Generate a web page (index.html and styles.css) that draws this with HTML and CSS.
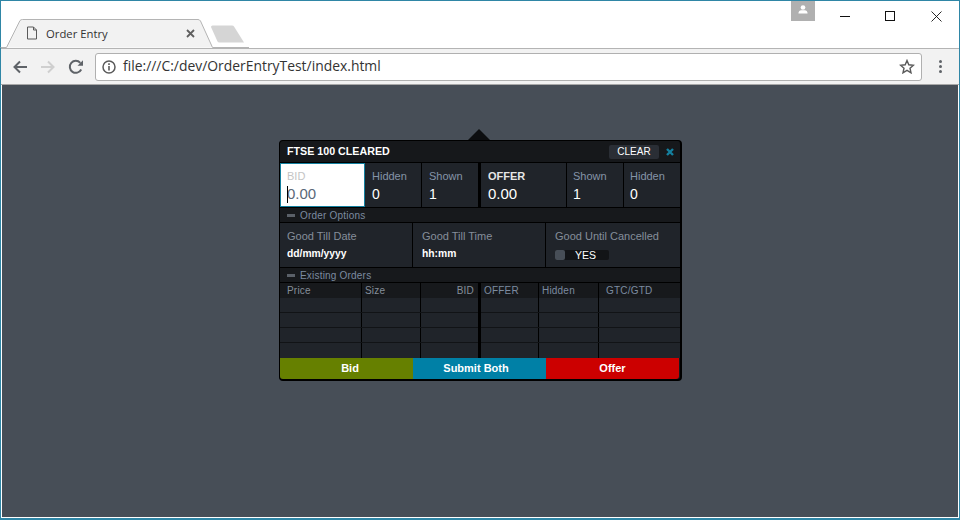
FILE: index.html
```html
<!DOCTYPE html>
<html lang="en">
<head>
  <meta charset="UTF-8" />
  <title>Order Entry</title>
  <link rel="stylesheet" href="styles.css">
</head>
<body>
  <div class="window">

    <!-- tab strip -->
    <div class="tabstrip">
      <svg class="tab-shape" width="250" height="48" viewBox="0 0 250 48">
        <path d="M0.500 47.500H6.500L20 20.500Q21 19.500 22.500 19.500H198Q199.500 19.500 200.500 21L212.500 47.500H249" fill="#f2f2f2" stroke="#b4b4b4"/>
        <path d="M211 27Q211 25.500 212.500 25.500H232Q233.500 25.500 234 26.500L244 42.500H219.500Q218 42.500 217.500 41.500Z" fill="#d5d5d5"/>
      </svg>
      <div class="tab">
        <svg class="tab-icon" width="12" height="14" viewBox="0 0 12 14">
          <path d="M1.500 1H7.500L10.500 4V13H1.500ZM7.500 1V4H10.500" fill="none" stroke="#5a5a5a"/>
        </svg>
        <span class="tab-title">Order Entry</span>
        <svg class="tab-close" width="9" height="9" viewBox="0 0 9 9">
          <path d="M1 1L8 8M8 1L1 8" stroke="#5f5f5f" stroke-width="1.800"/>
        </svg>
      </div>
      <div class="win-controls">
        <div class="profile">
          <svg width="10" height="9" viewBox="0 0 12 10.500">
            <circle cx="6" cy="2.800" r="2.800" fill="#fff"/>
            <path d="M0.500 10Q0.500 6.500 4 6H8Q11.500 6.500 11.500 10Z" fill="#fff"/>
          </svg>
        </div>
        <div class="win-btn">
          <svg width="11" height="11" viewBox="0 0 11 11"><path d="M0 5.500H10" stroke="#111"/></svg>
        </div>
        <div class="win-btn">
          <svg width="11" height="11" viewBox="0 0 11 11"><rect x="0.500" y="0.500" width="9" height="9" fill="none" stroke="#111"/></svg>
        </div>
        <div class="win-btn win-close">
          <svg width="11" height="11" viewBox="0 0 11 11"><path d="M0.500 0.500L10.500 10.500M10.500 0.500L0.500 10.500" stroke="#111" stroke-width="0.900"/></svg>
        </div>
      </div>
    </div>

    <!-- toolbar -->
    <div class="toolbar">
      <svg class="nav-icon" width="16" height="16" viewBox="0 0 16 16">
        <path d="M15 8H3M8 2.500L2.500 8L8 13.500" fill="none" stroke="#5f6368" stroke-width="2"/>
      </svg>
      <svg class="nav-icon" width="16" height="16" viewBox="0 0 16 16">
        <path d="M1 8H13M8 2.500L13.500 8L8 13.500" fill="none" stroke="#cfcfcf" stroke-width="2"/>
      </svg>
      <svg class="nav-icon nav-reload" width="16" height="16" viewBox="0 0 16 16">
        <path d="M13.200 10.500A6 6 0 1 1 12.300 3.800" fill="none" stroke="#5f6368" stroke-width="2"/>
        <path d="M9.500 6.800H15V1.300Z" fill="#5f6368"/>
      </svg>
      <div class="omnibox">
        <svg class="info-icon" width="14" height="14" viewBox="0 0 14 14">
          <circle cx="7" cy="7" r="6" fill="none" stroke="#5a5a5a" stroke-width="1.500"/>
          <path d="M7 6V10.500M7 3.300V5" stroke="#5a5a5a" stroke-width="1.600"/>
        </svg>
        <span class="url">file:///C:/dev/OrderEntryTest/index.html</span>
        <svg class="star" width="16" height="15" viewBox="0 0 16 15">
          <path d="M8 1.500L9.800 5.800L14.500 6.200L11 9.200L12 13.800L8 11.400L4 13.800L5 9.200L1.500 6.200L6.200 5.800Z" fill="none" stroke="#5a5a5a" stroke-width="1.400"/>
        </svg>
      </div>
      <div class="menu-dots"><i></i><i></i><i></i></div>
    </div>

    <div class="content">
      <div class="ticket">
        <div class="ticket-head">
          <span class="ticket-title">FTSE 100 CLEARED</span>
          <span class="clear-btn">CLEAR</span>
          <svg class="close-x" width="8" height="8" viewBox="0 0 8 8">
            <path d="M1 1L7 7M7 1L1 7" stroke="#14809f" stroke-width="2.400"/>
          </svg>
        </div>

        <div class="qty-row">
          <div class="qty-side">
            <div class="cell main active">
              <label>BID</label>
              <div class="price"><span class="caret"></span>0.00</div>
            </div>
            <div class="cell sub"><label>Hidden</label><div class="val">0</div></div>
            <div class="cell sub"><label>Shown</label><div class="val">1</div></div>
          </div>
          <div class="qty-side">
            <div class="cell main">
              <label class="strong">OFFER</label>
              <div class="price">0.00</div>
            </div>
            <div class="cell sub"><label>Shown</label><div class="val">1</div></div>
            <div class="cell sub"><label>Hidden</label><div class="val">0</div></div>
          </div>
        </div>

        <div class="section"><i></i>Order Options</div>
        <div class="options">
          <div class="opt"><label>Good Till Date</label><div class="val-small">dd/mm/yyyy</div></div>
          <div class="opt"><label>Good Till Time</label><div class="val-small">hh:mm</div></div>
          <div class="opt">
            <label>Good Until Cancelled</label>
            <div class="toggle"><i></i><span>YES</span></div>
          </div>
        </div>

        <div class="section"><i></i>Existing Orders</div>
        <div class="orders">
          <div class="orders-side bid">
            <div class="row head"><span>Price</span><span class="size">Size</span><span class="right">BID</span></div>
            <div class="row"><span></span><span></span><span></span></div>
            <div class="row"><span></span><span></span><span></span></div>
            <div class="row"><span></span><span></span><span></span></div>
            <div class="row"><span></span><span></span><span></span></div>
          </div>
          <div class="orders-side offer">
            <div class="row head"><span>OFFER</span><span>Hidden</span><span class="gtc">GTC/GTD</span></div>
            <div class="row"><span></span><span></span><span></span></div>
            <div class="row"><span></span><span></span><span></span></div>
            <div class="row"><span></span><span></span><span></span></div>
            <div class="row"><span></span><span></span><span></span></div>
          </div>
        </div>

        <div class="actions">
          <div class="act act-bid">Bid</div>
          <div class="act act-both">Submit Both</div>
          <div class="act act-offer">Offer</div>
        </div>
      </div>
    </div>
  </div>
</body>
</html>
```

FILE: styles.css
```css
* { margin: 0; padding: 0; box-sizing: border-box; }
html, body {
  width: 100%;
  height: 100%;
  overflow: hidden;
  background: #fff;
}

.window {
  width: 960px;
  height: 520px;
  border: 1px solid #2f86a6;
  border-bottom-width: 2px;
  display: flex;
  flex-direction: column;
  font-family: 'Liberation Sans', Arial, sans-serif;
}

/* browser chrome */
.tabstrip {
  position: relative;
  height: 48px;
  flex: none;
  background: #fff;
  border-bottom: 1px solid #b4b4b4;
  display: flex;
}
.tab-shape {
  position: absolute;
  left: -1px;
  top: -1px;
}
.tab {
  position: relative;
  margin: 18px 0 0 25px;
  width: 169px;
  height: 28px;
  display: flex;
  align-items: center;
}
.tab-icon { flex: none; }
.tab-title {
  margin-left: 8px;
  font-family: 'Open Sans', sans-serif;
  font-size: 11.300px;
  color: #333;
  flex: 1;
}
.tab-close { flex: none; }
.win-controls {
  margin-left: auto;
  display: flex;
  align-items: flex-start;
  position: relative;
}
.profile {
  width: 24px;
  height: 20px;
  margin-right: 8px;
  background: #b0b0b0;
  display: flex;
  align-items: center;
  justify-content: center;
  padding-bottom: 3px;
}
.win-btn {
  width: 45px;
  height: 30px;
  display: flex;
  align-items: center;
  justify-content: center;
}
.win-close { width: 46px; }

.toolbar {
  height: 36px;
  flex: none;
  background: #f2f2f2;
  border-bottom: 1px solid #a8a8a8;
  display: flex;
  align-items: center;
  padding: 0 0 0 11px;
}
.nav-icon { flex: none; margin-right: 12px; }
.nav-reload { margin-right: 11px; }
.omnibox {
  width: 827px;
  height: 28px;
  background: #fff;
  border: 1px solid #b0b0b0;
  border-radius: 3px;
  display: flex;
  align-items: center;
  padding: 0 6px;
}
.info-icon { flex: none; }
.url {
  margin-left: 7px;
  padding-bottom: 2px;
  font-family: 'Open Sans', sans-serif;
  font-size: 13.900px;
  color: #333;
  flex: 1;
}
.star { flex: none; }
.menu-dots {
  margin-left: 17px;
  display: flex;
  flex-direction: column;
  gap: 2px;
}
.menu-dots i {
  width: 3px;
  height: 3px;
  background: #5f6368;
  border-radius: 50%;
}

.content {
  flex: 1;
  background: #474e57;
  display: flex;
  justify-content: center;
  align-items: flex-start;
  margin: 0 1px 1px;
  padding: 55px 0 0 1px;
}

/* order ticket */
.ticket {
  position: relative;
  width: 403px;
  height: 241px;
  background: #16181b;
  border: 1px solid #000;
  border-bottom-width: 2px;
  border-right-width: 2px;
  border-radius: 4px;
  display: flex;
  flex-direction: column;
  color: #fff;
  font-size: 12px;
}
.ticket:before {
  content: '';
  position: absolute;
  left: 188px;
  top: -12px;
  border-left: 11px solid transparent;
  border-right: 11px solid transparent;
  border-bottom: 11px solid #0d0e10;
}
.ticket-head {
  height: 22px;
  flex: none;
  display: flex;
  align-items: center;
  padding: 0 6px 0 7px;
  border-bottom: 1px solid #000;
}
.ticket-title {
  flex: 1;
  padding-bottom: 1px;
  font-size: 10.700px;
  font-weight: bold;
}
.clear-btn {
  width: 50px;
  height: 14px;
  line-height: 14px;
  text-align: center;
  background: #2a2e35;
  border-radius: 2px;
  font-size: 10px;
  margin-right: 7px;
}
.close-x { flex: none; }

.qty-row {
  height: 45px;
  flex: none;
  display: flex;
  border-bottom: 1px solid #000;
}
.qty-side {
  display: flex;
  flex: none;
}
.qty-side:first-child {
  width: 201px;
  border-right: 3px solid #000;
}
.qty-side:last-child { width: 199px; }
.cell {
  background: #20242a;
  border-right: 1px solid #000;
  padding: 6px 0 0 7px;
}
.cell:last-child { border-right: 0; }
.cell.main { width: 86px; }
.qty-side:first-child .cell.main { width: 85px; }
.cell.sub { width: 57px; }
.cell.sub:last-child { flex: 1; }
.qty-side:last-child .cell.sub { padding-left: 6px; }
.cell label {
  display: block;
  font-size: 11px;
  line-height: 14px;
  color: #8594a8;
}
.cell label.strong {
  color: #e6e6e6;
  font-weight: bold;
}
.val {
  font-size: 14px;
  line-height: 17px;
  margin-top: 3px;
}
.price {
  position: relative;
  font-size: 15px;
  line-height: 18px;
  margin-top: 2px;
}
.cell.active {
  background: #fff;
  border: 1px solid #14809f;
  padding: 5px 0 0 6px;
}
.cell.active label { color: #c4c4c4; }
.cell.active .price { color: #5a6878; }
.caret {
  position: absolute;
  left: 0;
  top: 1px;
  width: 1px;
  height: 17px;
  background: #000;
}

.section {
  height: 15px;
  flex: none;
  display: flex;
  align-items: center;
  padding-left: 7px;
  font-size: 10px;
  letter-spacing: 0.2px;
  color: #7c8ba0;
  border-bottom: 1px solid #000;
  background: #17191c;
}
.section i {
  width: 8px;
  height: 3px;
  margin-right: 5px;
  background: #5a6068;
}

.options {
  height: 45px;
  flex: none;
  display: flex;
  border-bottom: 1px solid #000;
}
.opt {
  width: 133px;
  background: #20242a;
  border-right: 1px solid #000;
  padding: 6px 0 0 7px;
}
.opt:nth-child(2) { padding-left: 9px; }
.opt:last-child {
  flex: 1;
  border-right: 0;
  padding-left: 9px;
}
.opt label {
  display: block;
  font-size: 11px;
  line-height: 14px;
  color: #858e9a;
}
.val-small {
  margin-top: 4px;
  font-size: 10.300px;
  font-weight: bold;
  line-height: 13px;
}
.toggle {
  width: 54px;
  height: 10px;
  margin-top: 7px;
  background: #121417;
  border-radius: 2px;
  display: flex;
  align-items: center;
  font-size: 10.500px;
}
.toggle i {
  width: 10px;
  height: 10px;
  background: #474e57;
  border-radius: 2px;
  flex: none;
}
.toggle span { margin-left: 10px; }

.orders {
  flex: none;
  height: 75px;
  display: flex;
}
.orders-side { flex: none; }
.orders-side.bid {
  width: 201px;
  border-right: 3px solid #000;
}
.orders-side.offer { width: 199px; }
.row {
  display: grid;
  height: 15px;
  background: #20242a;
  border-bottom: 1px solid #111316;
}
.row:last-child { border-bottom: 0; }
.bid .row { grid-template-columns: 82px 59px 1fr; }
.offer .row { grid-template-columns: 58px 60px 1fr; }
.row span { border-right: 1px solid #000; }
.row span:last-child { border-right: 0; }
.row.head {
  background: #17191c;
  font-size: 10px;
  letter-spacing: 0.2px;
  line-height: 15px;
  color: #858e9a;
  border-bottom-color: #17191c;
}
.offer .row.head { color: #7c8ba0; }
.row.head span { padding-left: 7px; }
.row.head span.size { padding-left: 3px; }
.offer .row.head span { padding-left: 3px; }
.offer .row.head span.gtc { padding-left: 7px; }
.row.head span.right {
  text-align: right;
  padding-right: 4px;
}

.actions {
  flex: none;
  height: 21px;
  display: flex;
}
.act {
  width: 133px;
  text-align: center;
  font-size: 11px;
  font-weight: bold;
  line-height: 21px;
}
.act-bid {
  background: #668000;
  border-bottom-left-radius: 3px;
  padding-left: 7px;
}
.act-both {
  background: #0080a6;
  padding-right: 7px;
}
.act-offer {
  background: #cc0000;
  border-bottom-right-radius: 3px;
}
```
